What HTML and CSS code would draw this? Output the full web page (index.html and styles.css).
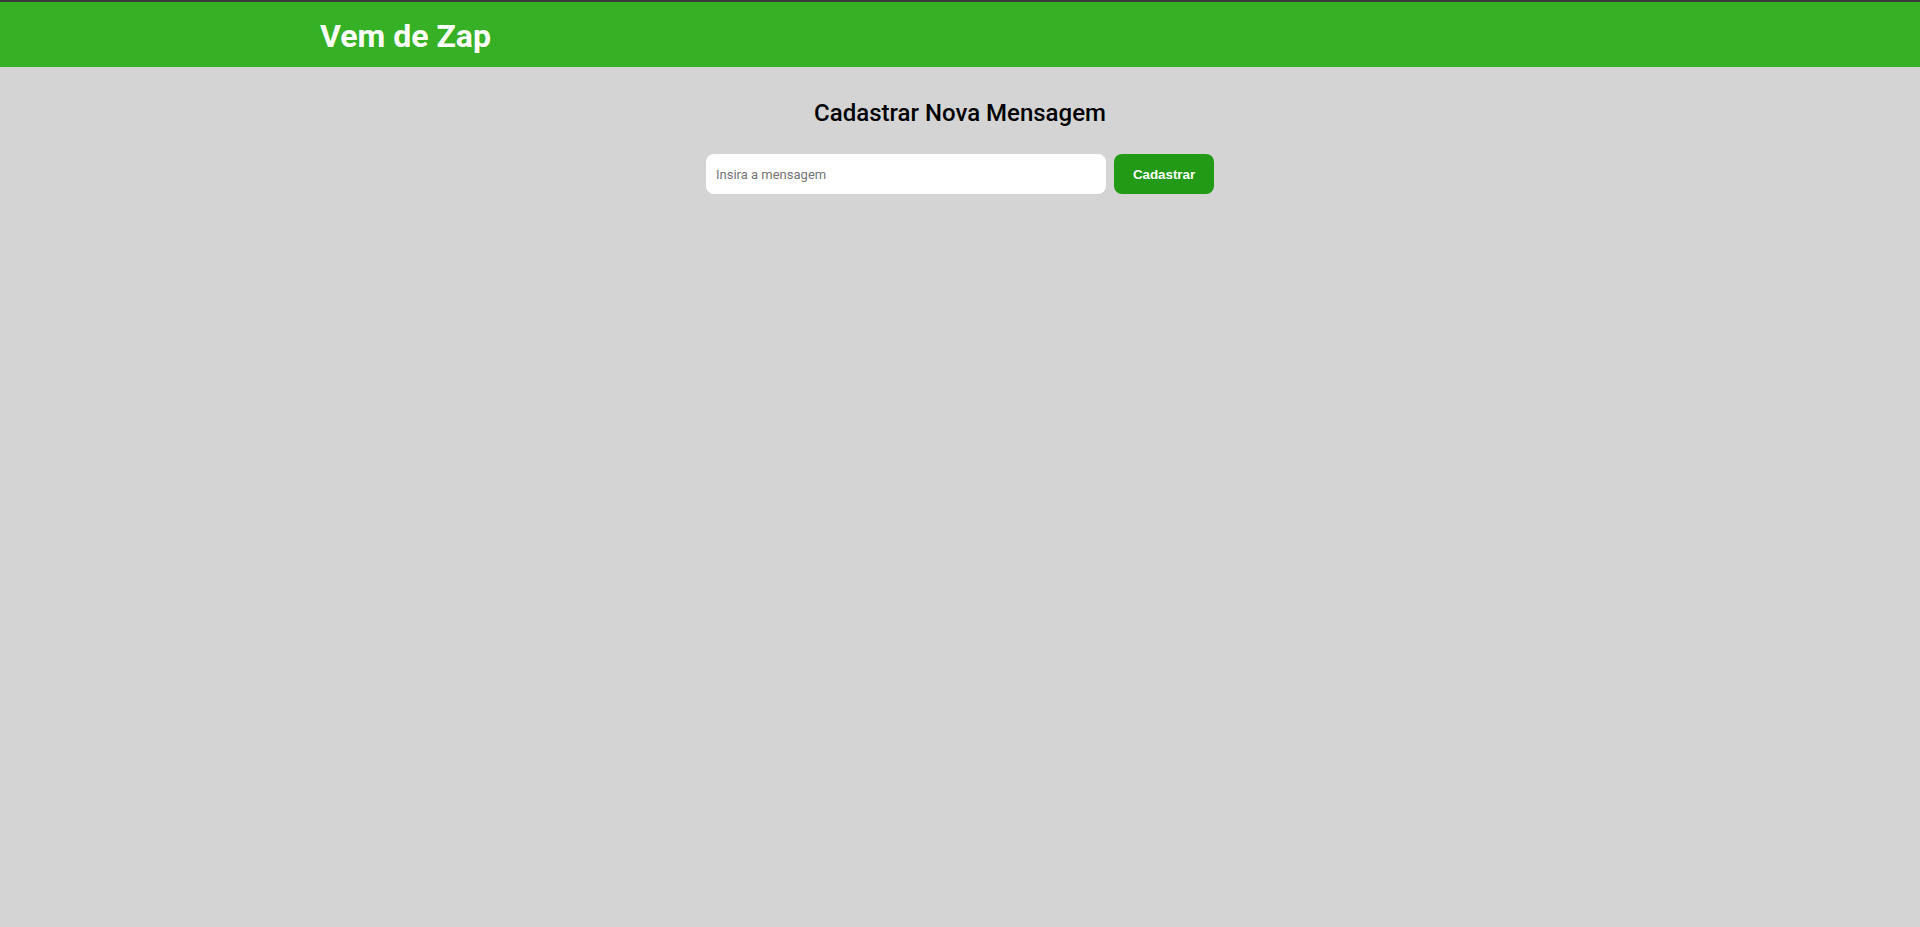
FILE: index.html
```html
<!DOCTYPE html>
<html lang="pt-BR">
<head>
<meta charset="utf-8">
<title>Vem de Zap</title>
<link rel="stylesheet" href="styles.css">
</head>
<body>
<header class="topbar">
  <div class="topbar-inner">
    <h1 class="brand">Vem de Zap</h1>
  </div>
</header>
<main class="content">
  <h2 class="page-title">Cadastrar Nova Mensagem</h2>
  <form class="message-form">
    <input class="message-input" type="text" placeholder="Insira a mensagem">
    <button class="submit-btn" type="button">Cadastrar</button>
  </form>
</main>
</body>
</html>
```

FILE: styles.css
```css
html, body {
  margin: 0;
  padding: 0;
}

body {
  background: #d4d4d4;
  font-family: Roboto, "Liberation Sans", Arial, sans-serif;
  min-height: 927px;
}

.topbar {
  background: #36b025;
  border-top: 2px solid #3a3a3a;
  height: 65px;
}

.topbar-inner {
  width: 1280px;
  margin: 0 auto;
  height: 100%;
  display: flex;
  align-items: center;
}

.brand {
  margin: 0;
  padding-top: 3px;
  color: #ffffff;
  font-size: 32px;
  font-weight: 700;
  line-height: 1;
}

.content {
  display: flex;
  flex-direction: column;
  align-items: center;
  padding-top: 32px;
}

.page-title {
  margin: 0;
  font-size: 24px;
  font-weight: 500;
  color: #000;
  line-height: 28px;
}

.message-form {
  display: flex;
  gap: 8px;
  margin-top: 27px;
}

.message-input {
  width: 400px;
  height: 40px;
  box-sizing: border-box;
  border: none;
  border-radius: 8px;
  background: #fff;
  padding: 0 10px;
  font-family: Roboto, "Liberation Sans", sans-serif;
  font-size: 13px;
  color: #222;
  outline: none;
}

.message-input::placeholder {
  color: #757575;
}

.submit-btn {
  width: 100px;
  height: 40px;
  border: none;
  border-radius: 8px;
  background: #229a16;
  color: #fff;
  font-family: "Liberation Sans", Arial, sans-serif;
  font-size: 13.333px;
  font-weight: 700;
  cursor: pointer;
}
```
